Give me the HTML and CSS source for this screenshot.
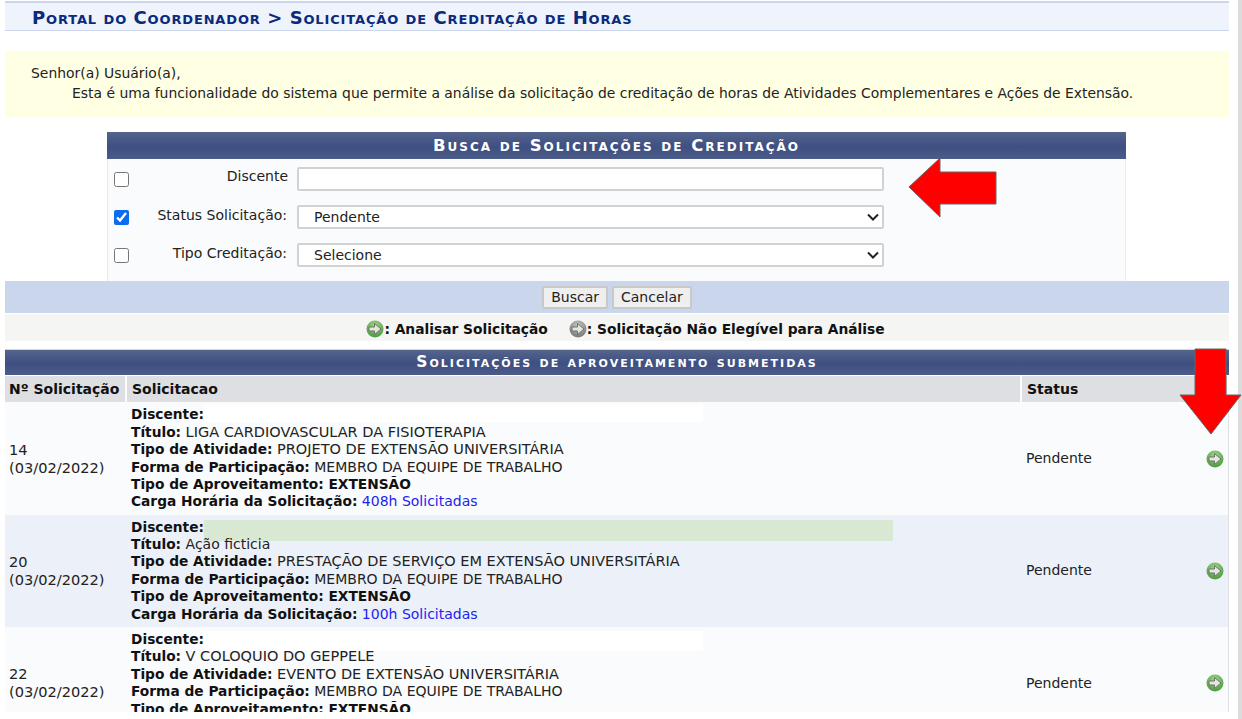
FILE: index.html
```html
<!DOCTYPE html>
<html lang="pt-BR">
<head>
    <meta charset="UTF-8">
    <meta name="viewport" content="width=device-width, initial-scale=1.0">
    <title>Solicitação de Creditação de Horas</title>
    <link rel="stylesheet" href="styles.css">
</head>
<body>
    <svg class="defs" width="0" height="0" aria-hidden="true">
        <defs>
            <radialGradient id="gradVerde" cx="50%" cy="30%" r="70%">
                <stop offset="0%" stop-color="#a6d48f"/>
                <stop offset="100%" stop-color="#479a3c"/>
            </radialGradient>
            <radialGradient id="gradCinza" cx="50%" cy="30%" r="70%">
                <stop offset="0%" stop-color="#c8c8c8"/>
                <stop offset="100%" stop-color="#767676"/>
            </radialGradient>
            <symbol id="setaCirculo" viewBox="0 0 18 18">
                <path d="M3 7H8.5V3.5L15 9l-6.5 5.5V11H3z" fill="#e3e6df" stroke="#6d7568" stroke-width="1"/>
            </symbol>
        </defs>
    </svg>

    <div class="pagina">
        <h2 class="titulo">Portal do Coordenador &gt; Solicitação de Creditação de Horas</h2>

        <div class="aviso">
            <p>Senhor(a) Usuário(a),</p>
            <p class="recuo">Esta é uma funcionalidade do sistema que permite a análise da solicitação de creditação de horas de Atividades Complementares e Ações de Extensão.</p>
        </div>

        <form class="busca">
            <div class="busca-caption">Busca de Solicitações de Creditação</div>
            <div class="busca-campos">
                <input type="checkbox">
                <label class="rotulo rotulo-alto">Discente</label>
                <input type="text" class="campo">

                <input type="checkbox" checked>
                <label class="rotulo">Status Solicitação:</label>
                <select class="campo">
                    <option>Pendente</option>
                </select>

                <input type="checkbox">
                <label class="rotulo">Tipo Creditação:</label>
                <select class="campo">
                    <option>Selecione</option>
                </select>
            </div>
        </form>

        <div class="botoes">
            <button type="button">Buscar</button>
            <button type="button">Cancelar</button>
        </div>

        <div class="legenda">
            <span class="legenda-item">
                <svg class="icone" viewBox="0 0 18 18"><circle cx="9" cy="9" r="8.5" fill="url(#gradVerde)"/><use href="#setaCirculo"/></svg>: Analisar Solicitação
            </span>
            <span class="legenda-item">
                <svg class="icone" viewBox="0 0 18 18"><circle cx="9" cy="9" r="8.5" fill="url(#gradCinza)"/><use href="#setaCirculo"/></svg>: Solicitação Não Elegível para Análise
            </span>
        </div>

        <div class="lista-caption">Solicitações de aproveitamento submetidas</div>
        <table class="lista">
            <colgroup>
                <col class="col-num">
                <col>
                <col class="col-status">
                <col class="col-acao">
            </colgroup>
            <thead>
                <tr>
                    <th>Nº Solicitação</th>
                    <th>Solicitacao</th>
                    <th colspan="2">Status</th>
                </tr>
            </thead>
            <tbody>
                <tr class="impar">
                    <td class="numero">14<br>(03/02/2022)</td>
                    <td>
                        <div class="linha"><b>Discente:</b><span class="tarja"></span></div>
                        <div class="linha"><b>Título:</b> <span class="valor">LIGA CARDIOVASCULAR DA FISIOTERAPIA</span></div>
                        <div class="linha"><b>Tipo de Atividade:</b> <span class="valor">PROJETO DE EXTENSÃO UNIVERSITÁRIA</span></div>
                        <div class="linha"><b>Forma de Participação:</b> MEMBRO DA EQUIPE DE TRABALHO</div>
                        <div class="linha"><b>Tipo de Aproveitamento: EXTENSÃO</b></div>
                        <div class="linha"><b>Carga Horária da Solicitação:</b> <a href="#">408h Solicitadas</a></div>
                    </td>
                    <td>Pendente</td>
                    <td class="acao"><svg class="icone" viewBox="0 0 18 18"><circle cx="9" cy="9" r="8.5" fill="url(#gradVerde)"/><use href="#setaCirculo"/></svg></td>
                </tr>
                <tr class="par">
                    <td class="numero">20<br>(03/02/2022)</td>
                    <td>
                        <div class="linha"><b>Discente:</b><span class="tarja tarja-verde"></span></div>
                        <div class="linha"><b>Título:</b> Ação ficticia</div>
                        <div class="linha"><b>Tipo de Atividade:</b> <span class="valor">PRESTAÇÃO DE SERVIÇO EM EXTENSÃO UNIVERSITÁRIA</span></div>
                        <div class="linha"><b>Forma de Participação:</b> MEMBRO DA EQUIPE DE TRABALHO</div>
                        <div class="linha"><b>Tipo de Aproveitamento: EXTENSÃO</b></div>
                        <div class="linha"><b>Carga Horária da Solicitação:</b> <a href="#">100h Solicitadas</a></div>
                    </td>
                    <td>Pendente</td>
                    <td class="acao"><svg class="icone" viewBox="0 0 18 18"><circle cx="9" cy="9" r="8.5" fill="url(#gradVerde)"/><use href="#setaCirculo"/></svg></td>
                </tr>
                <tr class="impar">
                    <td class="numero">22<br>(03/02/2022)</td>
                    <td>
                        <div class="linha"><b>Discente:</b><span class="tarja tarja-ultima"></span></div>
                        <div class="linha"><b>Título:</b> <span class="valor">V COLOQUIO DO GEPPELE</span></div>
                        <div class="linha"><b>Tipo de Atividade:</b> <span class="valor">EVENTO DE EXTENSÃO UNIVERSITÁRIA</span></div>
                        <div class="linha"><b>Forma de Participação:</b> MEMBRO DA EQUIPE DE TRABALHO</div>
                        <div class="linha"><b>Tipo de Aproveitamento: EXTENSÃO</b></div>
                        <div class="linha">&nbsp;</div>
                    </td>
                    <td>Pendente</td>
                    <td class="acao"><svg class="icone" viewBox="0 0 18 18"><circle cx="9" cy="9" r="8.5" fill="url(#gradVerde)"/><use href="#setaCirculo"/></svg></td>
                </tr>
            </tbody>
        </table>
    </div>

    <div class="faixa-direita"></div>

    <svg class="seta seta-esquerda" width="90" height="62" viewBox="0 0 90 62">
        <path d="M1 30 32 1V15H88V47H32V60z" fill="#f00" stroke="#666" stroke-width="1"/>
    </svg>
    <svg class="seta seta-baixo" width="64" height="88" viewBox="0 0 64 88">
        <path d="M16 1H47V47H62L32 86 1 47H16z" fill="#f00" stroke="#666" stroke-width="1"/>
    </svg>
</body>
</html>
```

FILE: styles.css
```css
html, body {
    margin: 0;
    padding: 0;
    height: 719px;
    overflow: hidden;
    background-color: #fff;
}

body {
    position: relative;
    font-family: "DejaVu Sans", Verdana, sans-serif;
    font-size: 14px;
    color: #222;
}

.defs {
    position: absolute;
}

.pagina {
    width: 1224px;
    height: 711px;
    overflow: hidden;
    margin-left: 5px;
    padding-top: 1px;
}

.titulo {
    margin: 0 0 20px 0;
    height: 27px;
    padding-left: 27px;
    border-top: 2px solid #ccd7ee;
    border-bottom: 1px solid #ccd7ee;
    background-color: #eff3fb;
    font-size: 18px;
    line-height: 30px;
    font-variant: small-caps;
    font-weight: bold;
    letter-spacing: 0.85px;
    word-spacing: -0.6px;
    color: #0b2a7c;
}

.aviso {
    height: 66px;
    box-sizing: border-box;
    padding: 12px 0 0 26px;
    margin-bottom: 15px;
    background-color: #ffffe3;
    font-size: 13.92px;
    line-height: 20px;
}

.aviso p {
    margin: 0;
}

.aviso .recuo {
    padding-left: 41px;
}

.busca {
    width: 1019px;
    margin: 0 0 0 102px;
}

.busca-caption, .lista-caption {
    background: linear-gradient(#54648c, #3e4f82 55%, #4c5c88);
    color: #fff;
    font-weight: bold;
    font-variant: small-caps;
    text-align: center;
}

.busca-caption {
    height: 27px;
    line-height: 28px;
    font-size: 16.5px;
    letter-spacing: 2px;
}

.busca-campos {
    display: grid;
    grid-template-columns: 16px 158px 587px;
    grid-auto-rows: 24px;
    row-gap: 14px;
    align-items: center;
    height: 122px;
    box-sizing: border-box;
    padding: 8px 0 0 6px;
    background-color: #f9fbfd;
    border-right: 1px solid #e8eaee;
    border-left: 1px solid #e8eaee;
}

.busca-campos input[type="checkbox"] {
    width: 15px;
    height: 15px;
    margin: 0;
    accent-color: #0b6cf0;
}

.rotulo {
    justify-self: end;
    margin-top: -4px;
    margin-right: 1px;
    white-space: nowrap;
}

.rotulo-alto {
    margin-top: -7px;
    margin-right: 0;
}

.campo {
    margin-left: 9px;
    height: 24px;
    width: 587px;
    box-sizing: border-box;
    border: 2px solid #d2d2d2;
    border-radius: 2px;
    background-color: #fff;
    font-family: inherit;
    font-size: 14px;
    color: #222;
}

select.campo {
    padding-left: 15px;
    appearance: none;
    background-image: url("data:image/svg+xml;utf8,<svg xmlns='http://www.w3.org/2000/svg' width='12' height='8'><path d='M1 1.5 6 6.5 11 1.5' fill='none' stroke='%23222' stroke-width='2'/></svg>");
    background-repeat: no-repeat;
    background-position: right 3px center;
}

.botoes {
    display: flex;
    justify-content: center;
    gap: 4px;
    align-items: center;
    height: 32px;
    background-color: #c9d6ec;
    margin-bottom: 1px;
}

.botoes button {
    height: 23px;
    padding: 0 7px;
    border: 2px solid #c8c8c8;
    border-radius: 2px;
    background-color: #efefef;
    font-family: inherit;
    font-size: 14px;
    color: #222;
}

.legenda {
    display: flex;
    justify-content: center;
    gap: 21px;
    height: 27px;
    padding: 2px 0 0 17px;
    box-sizing: border-box;
    align-items: center;
    background-color: #f5f5f3;
    margin-bottom: 8px;
    font-size: 13.8px;
    font-weight: bold;
    color: #111;
}

.legenda-item {
    display: flex;
    align-items: center;
}

.icone {
    width: 18px;
    height: 18px;
    display: block;
}

.lista-caption {
    height: 26px;
    line-height: 25px;
    font-size: 15.5px;
    letter-spacing: 2px;
    border-top: 1px solid #d6d6d6;
    box-sizing: border-box;
}

.lista {
    width: 1224px;
    border-collapse: collapse;
    table-layout: fixed;
    margin-top: 1px;
}

.col-num {
    width: 121px;
}

.col-status {
    width: 178px;
}

.col-acao {
    width: 29px;
}

.lista th {
    height: 26px;
    box-sizing: border-box;
    padding: 1px 5px 0 5px;
    background-color: #dedfe3;
    border-right: 2px solid #fbfbfb;
    border-bottom: 1px solid #fbfbfb;
    text-align: left;
    font-weight: bold;
    color: #111;
}

.lista th:first-child {
    padding-left: 4px;
}

.lista td {
    padding: 0 5px;
    height: 112.5px;
    box-sizing: border-box;
    line-height: 17.4px;
    vertical-align: middle;
}

.lista td.numero {
    padding-left: 4px;
    font-size: 14.6px;
    line-height: 18px;
}

.lista td.acao {
    padding: 0 0 0 7px;
    border-right: 1px solid #dfe1e6;
}

.impar {
    background-color: #f9fbfd;
}

.par {
    background-color: #ecf1f9;
}

.linha {
    position: relative;
}

.linha b {
    font-size: 13.75px;
    color: #111;
}

.valor {
    font-size: 14.5px;
}

.tarja {
    position: absolute;
    left: 73px;
    top: -2px;
    width: 499px;
    height: 18px;
    background-color: #fff;
}

.tarja-verde {
    top: 1px;
    width: 689px;
    height: 21px;
    background-color: #d9e8d3;
}

.tarja-ultima {
    top: 0;
    height: 20px;
}

.lista a {
    color: #2222ee;
    text-decoration: none;
}

.faixa-direita {
    position: absolute;
    top: 0;
    right: 0;
    bottom: 0;
    width: 4px;
    background-color: #dcdcdc;
}

.seta {
    position: absolute;
}

.seta-esquerda {
    left: 908px;
    top: 157px;
}

.seta-baixo {
    left: 1179px;
    top: 348px;
}
```
